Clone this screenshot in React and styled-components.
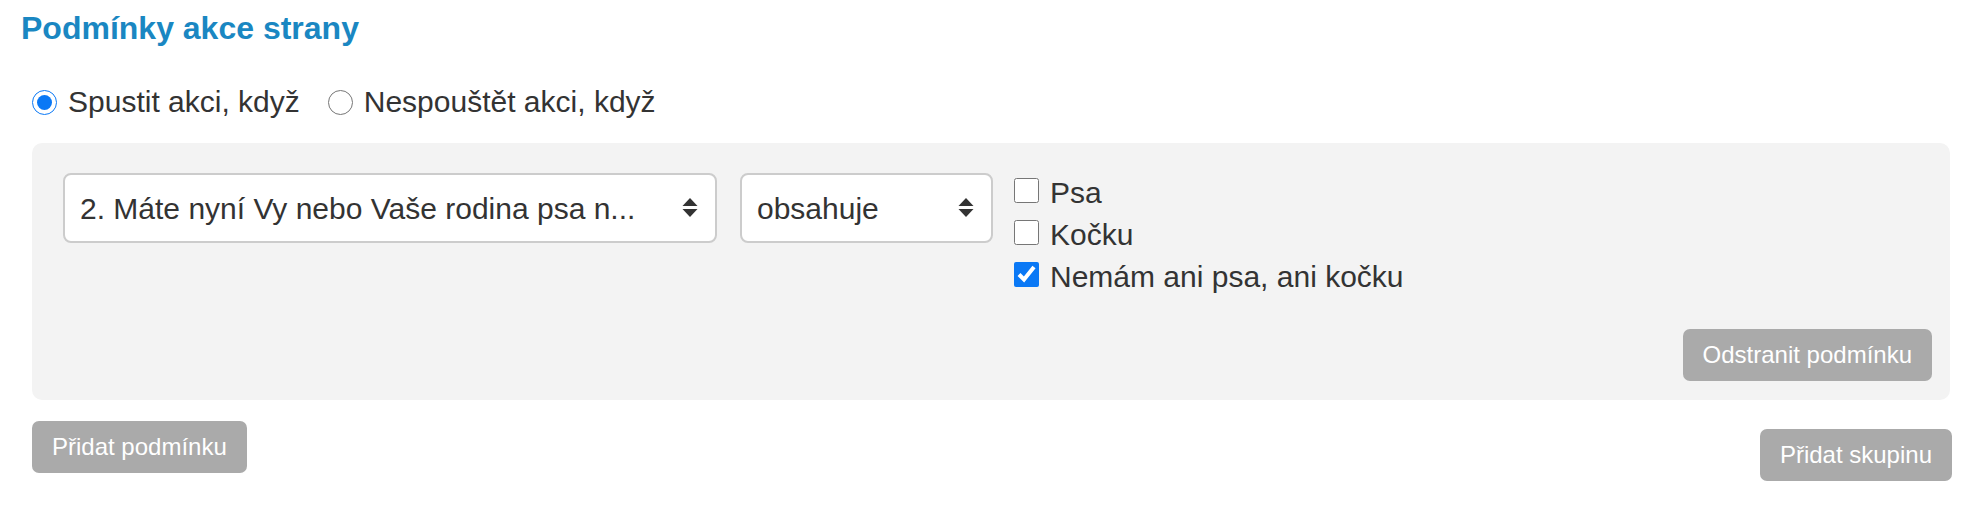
import React, { useState } from "react";
import styled, { createGlobalStyle } from "styled-components";

const GlobalStyle = createGlobalStyle`
  html, body {
    margin: 0;
    padding: 0;
    background: #ffffff;
  }
  body {
    font-family: "Liberation Sans", Arial, Helvetica, sans-serif;
    color: #333333;
  }
  * { box-sizing: border-box; }
`;

const Page = styled.div`
  padding: 10px 24px 0 21px;
`;

const Heading = styled.h2`
  margin: 0;
  font-size: 32px;
  line-height: 37px;
  font-weight: 700;
  color: #1a87c2;
`;

const Body = styled.div`
  padding-left: 11px;
`;

const RadioRow = styled.div`
  display: flex;
  align-items: center;
  height: 42px;
  margin-top: 34px;
`;

const ChoiceLabel = styled.label`
  display: flex;
  align-items: center;
  gap: ${(p) => p.$gap || 10}px;
  margin-right: ${(p) => p.$spacing || 0}px;
  font-size: 30px;
  line-height: 42px;
  height: 42px;
  color: #333333;
  cursor: pointer;
`;

const Radio = styled.input.attrs({ type: "radio" })`
  width: 25px;
  height: 25px;
  margin: 0;
  accent-color: #0a78f5;
`;

const Panel = styled.div`
  margin-top: 20px;
  background: #f3f3f3;
  border-radius: 10px;
  padding: 27px 18px 19px 31px;
`;

const ConditionRow = styled.div`
  display: flex;
  align-items: flex-start;
`;

const SelectWrap = styled.div`
  position: relative;
  width: ${(p) => p.$width}px;
  margin-top: 3px;
  margin-right: ${(p) => p.$gap}px;
  flex: none;
`;

const Select = styled.select`
  appearance: none;
  -webkit-appearance: none;
  width: 100%;
  height: 70px;
  border: 2px solid #cccccc;
  border-radius: 8px;
  background: #ffffff;
  font-family: "Liberation Sans", Arial, Helvetica, sans-serif;
  font-size: 30px;
  color: #333333;
  padding: 0 50px 0 15px;
  outline: none;
`;

const Arrow = styled.svg`
  position: absolute;
  right: 19px;
  top: 25px;
  pointer-events: none;
`;

const OptionList = styled.div`
  display: flex;
  flex-direction: column;
  margin-top: 2px;
`;

const Checkbox = styled.input.attrs({ type: "checkbox" })`
  width: 25px;
  height: 25px;
  margin: 0 0 5px 0;
  accent-color: #0a78f5;
`;

const Actions = styled.div`
  display: flex;
  justify-content: flex-end;
  margin-top: 31px;
`;

const Footer = styled.div`
  display: flex;
  justify-content: space-between;
  align-items: flex-start;
  margin-top: 21px;
`;

const GrayButton = styled.button`
  background: #aaaaaa;
  color: #ffffff;
  border: none;
  border-radius: 7px;
  font-family: "Liberation Sans", Arial, Helvetica, sans-serif;
  font-size: 24px;
  line-height: 28px;
  padding: 12px 20px;
  margin-top: ${(p) => p.$offset || 0}px;
  margin-right: ${(p) => p.$pull || 0}px;
  cursor: pointer;
`;

const SortArrows = () => (
  <Arrow width="16" height="19" viewBox="0 0 16 19">
    <polygon points="8,0 15.5,8 0.5,8" fill="#333333" />
    <polygon points="0.5,11 15.5,11 8,19" fill="#333333" />
  </Arrow>
);

export default function App() {
  const [mode, setMode] = useState("run");
  const [checks, setChecks] = useState({ psa: false, kocku: false, zadne: true });
  const toggle = (k) => setChecks((c) => ({ ...c, [k]: !c[k] }));

  return (
    <>
      <GlobalStyle />
      <Page>
        <Heading>Podmínky akce strany</Heading>
        <Body>
          <RadioRow>
            <ChoiceLabel $gap={11} $spacing={28}>
              <Radio name="mode" checked={mode === "run"} onChange={() => setMode("run")} />
              Spustit akci, když
            </ChoiceLabel>
            <ChoiceLabel $gap={11}>
              <Radio name="mode" checked={mode === "skip"} onChange={() => setMode("skip")} />
              Nespouštět akci, když
            </ChoiceLabel>
          </RadioRow>

          <Panel>
            <ConditionRow>
              <SelectWrap $width={654} $gap={23}>
                <Select defaultValue="q2">
                  <option value="q2">2. Máte nyní Vy nebo Vaše rodina psa n...</option>
                </Select>
                <SortArrows />
              </SelectWrap>
              <SelectWrap $width={253} $gap={21}>
                <Select defaultValue="contains">
                  <option value="contains">obsahuje</option>
                </Select>
                <SortArrows />
              </SelectWrap>
              <OptionList>
                <ChoiceLabel $gap={11}>
                  <Checkbox checked={checks.psa} onChange={() => toggle("psa")} />
                  Psa
                </ChoiceLabel>
                <ChoiceLabel $gap={11}>
                  <Checkbox checked={checks.kocku} onChange={() => toggle("kocku")} />
                  Kočku
                </ChoiceLabel>
                <ChoiceLabel $gap={11}>
                  <Checkbox checked={checks.zadne} onChange={() => toggle("zadne")} />
                  Nemám ani psa, ani kočku
                </ChoiceLabel>
              </OptionList>
            </ConditionRow>
            <Actions>
              <GrayButton>Odstranit podmínku</GrayButton>
            </Actions>
          </Panel>

          <Footer>
            <GrayButton>Přidat podmínku</GrayButton>
            <GrayButton $offset={8} $pull={-2}>Přidat skupinu</GrayButton>
          </Footer>
        </Body>
      </Page>
    </>
  );
}
